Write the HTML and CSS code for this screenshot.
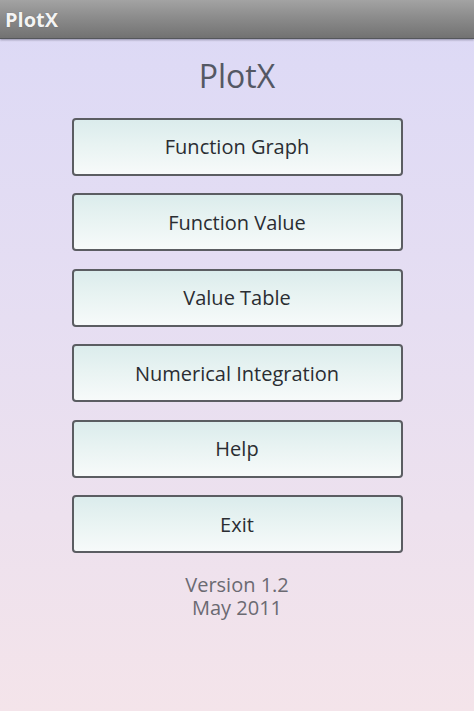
FILE: index.html
```html
<!DOCTYPE html>
<html>
<head>
<meta charset="utf-8">
<title>PlotX</title>
<link rel="stylesheet" href="styles.css">
</head>
<body>
<div class="screen">
  <header class="titlebar"><span class="titlebar-text">PlotX</span></header>
  <main class="content">
    <h1 class="app-title">PlotX</h1>
    <nav class="menu">
      <button class="menu-btn">Function Graph</button>
      <button class="menu-btn">Function Value</button>
      <button class="menu-btn">Value Table</button>
      <button class="menu-btn">Numerical Integration</button>
      <button class="menu-btn">Help</button>
      <button class="menu-btn">Exit</button>
    </nav>
    <p class="version">Version 1.2<br>May 2011</p>
  </main>
</div>
</body>
</html>
```
FILE: styles.css
```css
html, body {
  margin: 0;
  padding: 0;
  height: 100%;
}
body {
  font-family: "Open Sans", "Noto Sans", "DejaVu Sans", sans-serif;
  background: linear-gradient(to bottom, #dcd9f6 0%, #e6def2 45%, #f4e4ea 100%);
}
.screen {
  width: 474px;
  height: 711px;
  display: flex;
  flex-direction: column;
}
.titlebar {
  height: 38px;
  flex: none;
  display: flex;
  align-items: center;
  padding-left: 5px;
  background: linear-gradient(to bottom, #a3a3a3 0%, #8c8c8c 45%, #727272 100%);
  border-bottom: 1px solid #55575c;
  box-shadow: 0 1px 2px rgba(60, 60, 80, 0.45);
  position: relative;
  z-index: 1;
}
.titlebar-text {
  color: #f4f4f4;
  font-weight: 700;
  font-size: 20px;
  text-shadow: 0 0 1px rgba(0, 0, 0, 0.35);
}
.content {
  display: flex;
  flex-direction: column;
  align-items: center;
}
.app-title {
  margin: 17px 0 0;
  font-size: 32px;
  line-height: 40px;
  font-weight: 400;
  color: #545864;
}
.menu {
  margin-top: 21.5px;
  width: 331px;
  display: flex;
  flex-direction: column;
  gap: 17.6px;
}
.menu-btn {
  box-sizing: border-box;
  height: 58px;
  width: 100%;
  border: 2px solid #5b5d62;
  border-radius: 4px;
  background: linear-gradient(to bottom, #dbecec 0%, #e8f3f2 45%, #f7fafa 100%);
  font-family: inherit;
  font-size: 20px;
  color: #2a2d32;
  display: flex;
  align-items: center;
  justify-content: center;
  padding: 0;
}
.version {
  margin: 19.5px 0 0;
  font-size: 20px;
  line-height: 23.5px;
  text-align: center;
  color: #6b6a72;
}
```
